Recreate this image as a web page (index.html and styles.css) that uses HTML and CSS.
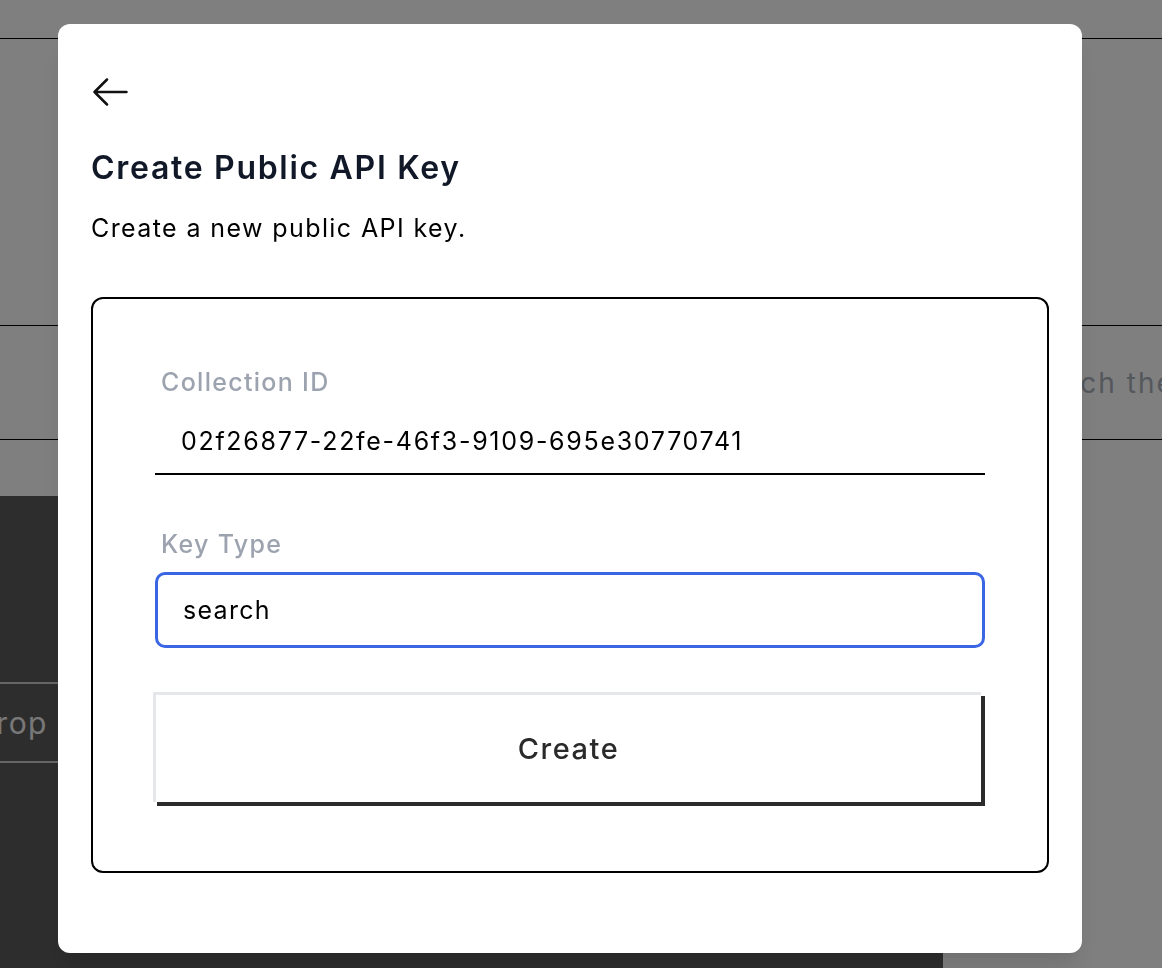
FILE: index.html
```html
<!DOCTYPE html>
<html lang="en">
<head>
<meta charset="utf-8">
<title>Create Public API Key</title>
<link rel="stylesheet" href="styles.css">
</head>
<body>
<div class="page">
  <header class="topbar"></header>
  <section class="hero"></section>
  <div class="search-row">
    <span class="search-placeholder">Search the docs</span>
  </div>
  <div class="spacer"></div>
  <div class="lower">
    <div class="dark">
      <div class="dark-top"></div>
      <div class="dark-row">
        <div class="clip"><span>Drop</span></div>
      </div>
      <div class="dark-rest"></div>
    </div>
    <div class="lower-right"></div>
  </div>
</div>

<div class="overlay">
  <div class="modal" role="dialog" aria-labelledby="modal-title">
    <button class="back" type="button" aria-label="Back">
      <svg width="36" height="28" viewBox="0 0 36 28" fill="none" stroke="#111" stroke-width="2.5" stroke-linecap="round" stroke-linejoin="round">
        <path d="M15 1.5 L2.5 14 L15 26.5 M2.5 14 H34.5"/>
      </svg>
    </button>
    <h2 class="title" id="modal-title">Create Public API Key</h2>
    <p class="subtitle">Create a new public API key.</p>
    <form class="card">
      <label class="label">Collection ID</label>
      <div class="value-field">02f26877-22fe-46f3-9109-695e30770741</div>
      <label class="label label-second">Key Type</label>
      <div class="input-focus">search</div>
      <button class="create" type="button">Create</button>
    </form>
  </div>
</div>
</body>
</html>
```

FILE: styles.css
```css
* { box-sizing: border-box; }

html, body {
  margin: 0;
  padding: 0;
}

body {
  font-family: Inter, "Noto Sans", "Liberation Sans", sans-serif;
  background: #ffffff;
  width: 1162px;
  height: 968px;
  overflow: hidden;
}

/* ---------- underlying page ---------- */
.page {
  display: flex;
  flex-direction: column;
  height: 968px;
}

.topbar {
  height: 39px;
  border-bottom: 1px solid #000;
}

.hero {
  height: 287px;
  border-bottom: 1px solid #000;
}

.search-row {
  height: 114px;
  border-bottom: 1px solid #000;
  display: flex;
  align-items: center;
  padding-left: 1012px;
  white-space: nowrap;
  overflow: hidden;
}

.search-placeholder {
  font-size: 28px;
  letter-spacing: 2px;
  color: #a8aeb9;
  margin-top: 1px;
}

.spacer {
  height: 56px;
}

.lower {
  flex: 1;
  display: flex;
}

.dark {
  width: 943px;
  background: #5b5b5b;
  display: flex;
  flex-direction: column;
}

.dark-top {
  height: 188px;
  border-bottom: 2px solid #cdcdcd;
}

.dark-row {
  height: 79px;
  border-bottom: 2px solid #cdcdcd;
  display: flex;
  align-items: center;
}

.clip {
  width: 48px;
  overflow: hidden;
  display: flex;
  justify-content: flex-end;
  white-space: nowrap;
  font-size: 30px;
  letter-spacing: 1.5px;
  color: #f0f0f0;
}

.dark-rest {
  flex: 1;
}

.lower-right {
  flex: 1;
  background: #fff;
}

/* ---------- overlay + modal ---------- */
.overlay {
  position: fixed;
  inset: 0;
  background: rgba(0, 0, 0, 0.5);
}

.modal {
  margin: 24px 0 0 58px;
  width: 1024px;
  height: 929px;
  background: #fff;
  border-radius: 12px;
  box-shadow: 0 20px 25px -5px rgba(0,0,0,0.1), 0 10px 10px -5px rgba(0,0,0,0.04);
  padding: 54px 33px 0 33px;
  display: flex;
  flex-direction: column;
  align-items: flex-start;
}

.back {
  border: 0;
  background: none;
  padding: 0;
  margin: 0 0 0 1px;
  width: 36px;
  height: 28px;
  display: block;
  cursor: pointer;
}

.back svg { display: block; }

.title {
  margin: 44px 0 0 0;
  font-size: 32px;
  line-height: 36px;
  font-weight: 600;
  letter-spacing: 1.7px;
  color: #111827;
}

.subtitle {
  margin: 26px 0 0 0;
  font-size: 25px;
  line-height: 32px;
  letter-spacing: 1.4px;
  color: #000;
}

.card {
  margin-top: 53px;
  width: 958px;
  height: 576px;
  border: 2px solid #000;
  border-radius: 12px;
  padding: 67px 62px 0 62px;
  display: flex;
  flex-direction: column;
}

.label {
  display: block;
  font-size: 25px;
  line-height: 32px;
  font-weight: 500;
  letter-spacing: 1.3px;
  color: #9ca3af;
  padding-left: 6px;
}

.value-field {
  margin-top: 10px;
  height: 67px;
  border-bottom: 2px solid #000;
  display: flex;
  align-items: center;
  padding-left: 26px;
  font-size: 25px;
  letter-spacing: 1.7px;
  color: #000;
}

.label-second {
  margin-top: 53px;
}

.input-focus {
  margin-top: 12px;
  height: 76px;
  border: 3px solid #3a66e3;
  border-radius: 10px;
  display: flex;
  align-items: center;
  padding-left: 25px;
  font-size: 25px;
  letter-spacing: 1.3px;
  color: #000;
}

.create {
  margin: 44px 0 0 -2px;
  width: 828px;
  height: 110px;
  background: #fff;
  border-style: solid;
  border-color: #e5e7eb;
  border-width: 3px 0 0 3px;
  box-shadow: 4px 4px 0 #2b2b2b;
  font-family: inherit;
  font-size: 29px;
  font-weight: 500;
  letter-spacing: 1.5px;
  color: #2a2a2a;
  padding: 0;
  cursor: pointer;
}
```
